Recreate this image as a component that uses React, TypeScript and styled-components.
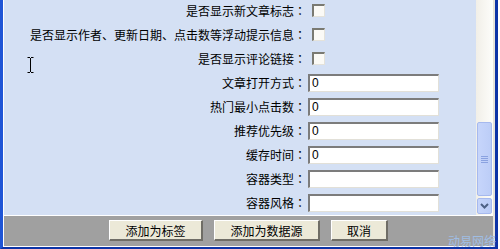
import React from 'react';
import styled, { createGlobalStyle } from 'styled-components';

type Row = { label: string; kind: 'check' | 'text'; value?: string };

const ROWS: Row[] = [
  { label: '是否显示新文章标志', kind: 'check' },
  { label: '是否显示作者、更新日期、点击数等浮动提示信息', kind: 'check' },
  { label: '是否显示评论链接', kind: 'check' },
  { label: '文章打开方式', kind: 'text', value: '0' },
  { label: '热门最小点击数', kind: 'text', value: '0' },
  { label: '推荐优先级', kind: 'text', value: '0' },
  { label: '缓存时间', kind: 'text', value: '0' },
  { label: '容器类型', kind: 'text', value: '' },
  { label: '容器风格', kind: 'text', value: '' },
];

const BUTTONS = [
  { title: '添加为标签', width: 94 },
  { title: '添加为数据源', width: 106 },
  { title: '取消', width: 57 },
];

const GlobalStyle = createGlobalStyle`
  html, body {
    margin: 0;
    padding: 0;
    background: #ffffff;
  }
  body {
    font-family: "Noto Sans CJK SC", "Noto Sans", sans-serif;
    font-size: 12px;
  }
`;

const App = () => {
  return (
    <>
      <GlobalStyle />
      <Frame>
        <Inner>
          <Main>
            <FormArea>
              <FormGrid>
                {ROWS.map((row, idx) => (
                  <React.Fragment key={`row-${idx}`}>
                    <Label>
                      {row.label}
                      <Colon>：</Colon>
                    </Label>
                    <Control>
                      {row.kind === 'check' ? (
                        <CheckBox />
                      ) : (
                        <TextInput defaultValue={row.value} />
                      )}
                    </Control>
                  </React.Fragment>
                ))}
              </FormGrid>
              <Cursor width="8" height="16" viewBox="0 0 8 16">
                <path
                  d="M0.5 0.5h2.5M4 0.5h2.5M3.5 1v14M0.5 15.5h2.5M4 15.5h2.5"
                  stroke="#000"
                  strokeWidth="1"
                  fill="none"
                />
              </Cursor>
            </FormArea>
            <ScrollBar>
              <Track>
                <Thumb>
                  <Grip>
                    <span />
                    <span />
                    <span />
                    <span />
                  </Grip>
                </Thumb>
              </Track>
              <ArrowButton>
                <svg width="9" height="6" viewBox="0 0 9 6">
                  <path d="M1 1l3.5 3.5L8 1" stroke="#4d6185" strokeWidth="2" fill="none" />
                </svg>
              </ArrowButton>
            </ScrollBar>
          </Main>
          <BottomBar>
            {BUTTONS.map((btn) => (
              <Button key={btn.title} $width={btn.width}>
                {btn.title}
              </Button>
            ))}
          </BottomBar>
        </Inner>
        <Watermark>动易网络</Watermark>
      </Frame>
    </>
  );
};

export default App;

const Frame = styled.div`
  position: relative;
  width: 498px;
  height: 249px;
  box-sizing: border-box;
  border-left: 3px solid #1f55d6;
  border-right: 3px solid #0d33a6;
  border-bottom: 2px solid #0d33a6;
`;

const Inner = styled.div`
  height: 100%;
  display: flex;
  flex-direction: column;
  border-left: 1px solid #ffffff;
  border-right: 2px solid #e6e3da;
`;

const Main = styled.div`
  display: flex;
  height: 215px;
`;

const FormArea = styled.div`
  position: relative;
  flex: 1;
  overflow: hidden;
  background: #d4e0f4;
`;

const FormGrid = styled.div`
  display: grid;
  grid-template-columns: 302px 1fr;
  grid-auto-rows: 24px;
  margin-top: -2px;
`;

const Label = styled.div`
  display: flex;
  align-items: center;
  justify-content: flex-end;
  color: #000000;
  font-size: 12px;
  white-space: nowrap;
`;

const Colon = styled.span`
  font-family: "Noto Sans CJK TC", "Noto Sans CJK SC", sans-serif;
`;

const Control = styled.div`
  display: flex;
  align-items: center;
  padding-left: 2px;
`;

const CheckBox = styled.span`
  display: block;
  width: 13px;
  height: 13px;
  margin-left: 4px;
  box-sizing: border-box;
  background: #fbfaf6;
  border-top: 2px solid #7a7a72;
  border-left: 2px solid #7a7a72;
  border-right: 1px solid #e4e2da;
  border-bottom: 1px solid #e4e2da;
`;

const TextInput = styled.input`
  width: 131px;
  height: 18px;
  box-sizing: border-box;
  margin: 1px 0 0;
  padding: 0 2px;
  background: #ffffff;
  border-top: 2px solid #7c7c7c;
  border-left: 2px solid #7c7c7c;
  border-right: 1px solid #e2e0d8;
  border-bottom: 1px solid #e2e0d8;
  font-family: "Liberation Sans", Arial, sans-serif;
  font-size: 12px;
  color: #000000;
  outline: none;
`;

const Cursor = styled.svg`
  position: absolute;
  left: 23px;
  top: 57px;
`;

const ScrollBar = styled.div`
  width: 17px;
  display: flex;
  flex-direction: column;
  background: linear-gradient(to right, #f1efe8, #fdfdfa);
`;

const Track = styled.div`
  flex: 1;
  position: relative;
`;

const Thumb = styled.div`
  position: absolute;
  left: 1px;
  right: 1px;
  top: 122px;
  height: 74px;
  box-sizing: border-box;
  border: 1px solid #a6b9ee;
  border-radius: 2px;
  background: linear-gradient(to right, #c6d5fb, #bccdf7);
  display: flex;
  align-items: center;
  justify-content: center;
`;

const Grip = styled.div`
  display: flex;
  flex-direction: column;
  gap: 1px;

  span {
    display: block;
    width: 7px;
    height: 1px;
    background: #8aa2e0;
  }
`;

const ArrowButton = styled.div`
  height: 16px;
  margin: 0 1px 1px;
  box-sizing: border-box;
  border: 1px solid #a6b9ee;
  border-radius: 2px;
  background: linear-gradient(to right, #c6d5fb, #b9cbf6);
  display: flex;
  align-items: center;
  justify-content: center;
`;

const BottomBar = styled.div`
  flex: 1;
  display: flex;
  justify-content: center;
  align-items: flex-start;
  gap: 11px;
  padding-top: 4px;
  background: #a0a0a0;
  border-top: 1px solid #ffffff;
  border-bottom: 1px solid #ffffff;
`;

const Button = styled.button<{ $width: number }>`
  width: ${(p) => p.$width}px;
  height: 21px;
  padding: 0;
  box-sizing: border-box;
  background: #ece9d8;
  border-top: 1px solid #ffffff;
  border-left: 1px solid #ffffff;
  border-right: 2px solid #6f6d66;
  border-bottom: 2px solid #6f6d66;
  font-family: "Noto Sans CJK SC", "Noto Sans", sans-serif;
  font-size: 12px;
  color: #000000;
`;

const Watermark = styled.div`
  position: absolute;
  right: -1px;
  bottom: -1px;
  font-size: 12px;
  line-height: 14px;
  color: #9fbde4;
`;
